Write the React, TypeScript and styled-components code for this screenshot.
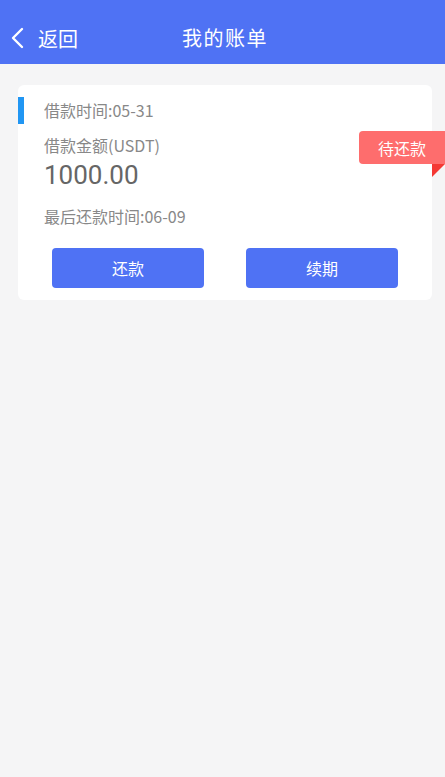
import React from "react";
import styled, { createGlobalStyle } from "styled-components";

const Global = createGlobalStyle`
  html, body { margin: 0; padding: 0; background: #f5f5f6; }
  body { font-family: "Noto Sans CJK SC", "Noto Sans", Roboto, sans-serif; }
  * { box-sizing: border-box; }
`;

const Page = styled.div`
  min-height: 777px;
  background: #f5f5f6;
`;

const Header = styled.header`
  height: 64px;
  background: #4f72f4;
  padding-top: 12px;
  position: relative;
  display: flex;
  align-items: center;
  justify-content: center;
  color: #fff;
`;

const Back = styled.div`
  position: absolute;
  left: 10px;
  top: 12px;
  height: 52px;
  display: flex;
  align-items: center;
  gap: 12px;
  font-size: 20px;
`;

const Title = styled.h1`
  margin: 0 0 0 5px;
  font-size: 20px;
  font-weight: 400;
  line-height: 52px;
  letter-spacing: 1.5px;
`;

const Card = styled.section`
  position: relative;
  margin: 21px 13px 0 18px;
  background: #fff;
  border-radius: 6px;
  padding: 12px 0 12px 0;
`;

const DateRow = styled.div`
  display: flex;
  align-items: center;
  height: 27px;
`;

const Bar = styled.span`
  width: 6px;
  height: 27px;
  background: #2196f3;
`;

const Label = styled.div<{ $mt?: number }>`
  font-size: 16px;
  line-height: 22px;
  color: #888;
  margin-left: 26px;
  margin-top: ${(p) => p.$mt ?? 0}px;
`;

const DateLabel = styled(Label)`
  margin-left: 20px;
  line-height: 27px;
`;

const Amount = styled.div`
  font-family: Roboto, "Noto Sans", sans-serif;
  font-size: 26px;
  line-height: 34px;
  color: #666;
  margin: 2px 0 0 26px;
`;

const Buttons = styled.div`
  display: flex;
  justify-content: space-between;
  padding: 0 34px;
  margin-top: 21px;
`;

const Button = styled.button`
  width: 152px;
  height: 40px;
  border: none;
  border-radius: 4px;
  background: #4f72f4;
  color: #fff;
  font-family: inherit;
  font-size: 16px;
`;

const Badge = styled.div`
  position: absolute;
  top: 46px;
  right: -13px;
  width: 86px;
  height: 33px;
  background: #fe6d6d;
  border-radius: 4px 0 0 4px;
  color: #fff;
  font-size: 16px;
  display: flex;
  align-items: center;
  justify-content: center;
  &::after {
    content: "";
    position: absolute;
    right: 0;
    bottom: -13px;
    width: 0;
    height: 0;
    border-top: 13px solid #f43834;
    border-right: 13px solid transparent;
  }
`;

export default function App() {
  return (
    <Page>
      <Global />
      <Header>
        <Back>
          <svg width="16" height="22" viewBox="0 0 16 22" fill="none">
            <path d="M12 2 L3 11 L12 20" stroke="#fff" strokeWidth="2.4" strokeLinecap="round" strokeLinejoin="round" />
          </svg>
          <span>返回</span>
        </Back>
        <Title>我的账单</Title>
      </Header>
      <Card>
        <DateRow>
          <Bar />
          <DateLabel>借款时间:05-31</DateLabel>
        </DateRow>
        <Label $mt={10}>借款金额(USDT)</Label>
        <Amount>1000.00</Amount>
        <Label $mt={13}>最后还款时间:06-09</Label>
        <Buttons>
          <Button>还款</Button>
          <Button>续期</Button>
        </Buttons>
        <Badge>待还款</Badge>
      </Card>
    </Page>
  );
}
